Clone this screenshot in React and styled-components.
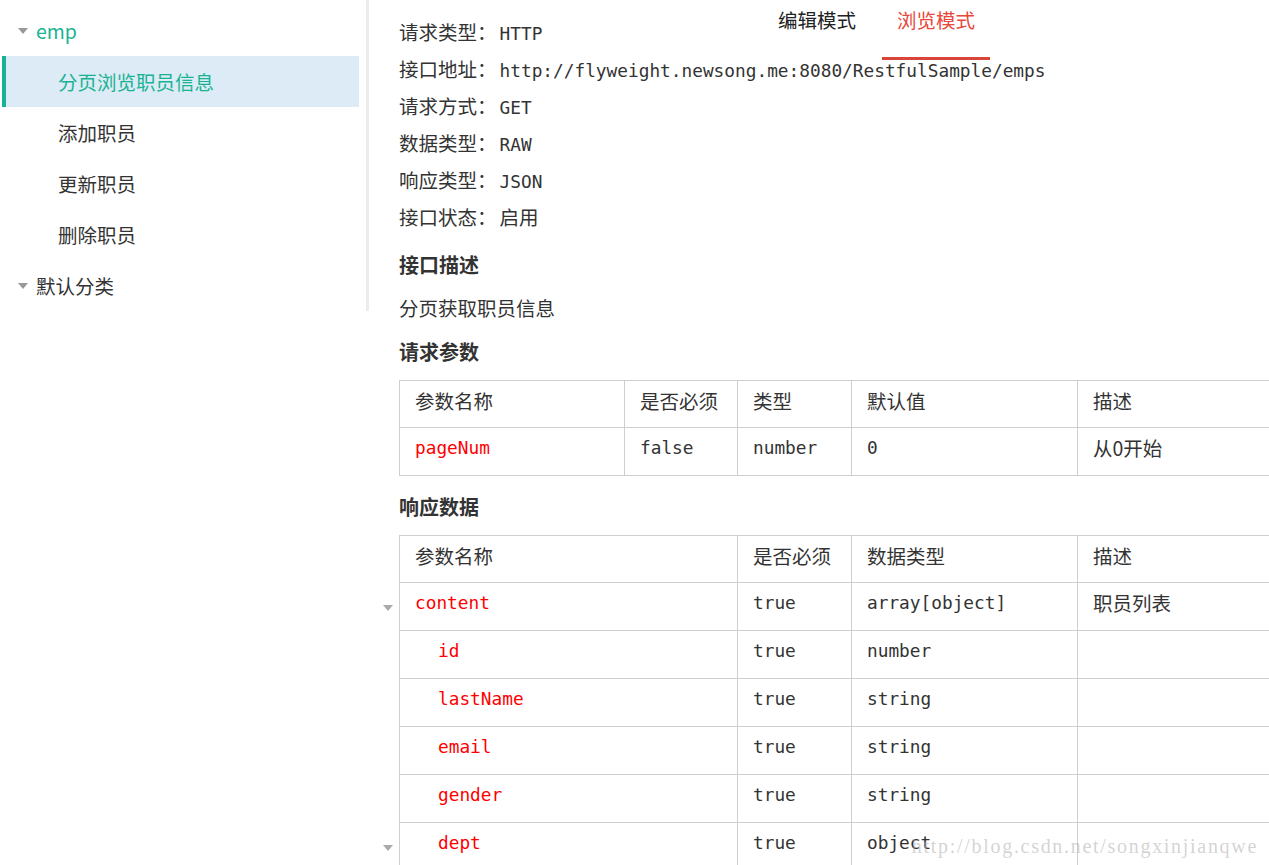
import React from 'react';
import styled, { createGlobalStyle } from 'styled-components';

const GlobalStyle = createGlobalStyle`
  html, body {
    margin: 0;
    padding: 0;
    background: #fff;
    overflow: hidden;
  }
  body {
    font-family: 'Noto Sans CJK SC', 'Noto Sans', sans-serif;
    color: #333;
  }
`;

const mono = `'DejaVu Sans Mono', 'Liberation Mono', 'Noto Sans CJK SC', monospace`;

const Page = styled.div`
  display: flex;
  width: 1269px;
  height: 865px;
  position: relative;
  overflow: hidden;
`;

const Sidebar = styled.nav`
  flex: 0 0 auto;
  width: 366px;
  height: 306px;
  padding-top: 5px;
  border-right: 3px solid #ececec;
  box-sizing: content-box;
`;

const NavList = styled.ul`
  list-style: none;
  margin: 0;
  padding: 0 7px 0 2px;
`;

const NavItem = styled.li`
  display: flex;
  align-items: center;
  height: 51px;
  font-size: 19.5px;
  padding-left: ${p => (p.$group ? '16px' : '52px')};
  border-left: 4px solid ${p => (p.$active ? '#19b394' : 'transparent')};
  margin-left: ${p => (p.$group ? '-4px' : '0')};
  background: ${p => (p.$active ? '#dcebf5' : 'transparent')};
  color: ${p => (p.$active || p.$green ? '#19b394' : '#333')};
`;

const Caret = styled.span`
  display: inline-block;
  width: 0;
  height: 0;
  border-left: 5px solid transparent;
  border-right: 5px solid transparent;
  border-top: 6px solid #999;
  margin-right: 8px;
`;

const Main = styled.main`
  flex: 1 1 auto;
  position: relative;
  padding: 13px 0 0 30px;
  min-width: 0;
`;

const Tabs = styled.div`
  position: absolute;
  top: 0;
  left: 394px;
  display: flex;
  gap: 11px;
`;

const Tab = styled.div`
  width: 108px;
  height: 54px;
  padding-top: 3px;
  box-sizing: content-box;
  text-align: center;
  line-height: 34px;
  font-size: 19.5px;
  color: ${p => (p.$active ? '#e8473b' : '#222')};
  border-bottom: 3px solid ${p => (p.$active ? '#d9453a' : 'transparent')};
`;

const InfoLine = styled.div`
  height: 37px;
  line-height: 37px;
  font-size: 19.5px;
  white-space: nowrap;
`;

const Value = styled.span`
  font-family: ${p => (p.$mono ? mono : 'inherit')};
  font-size: ${p => (p.$mono ? '17.8px' : 'inherit')};
  margin-left: 3px;
`;

const Heading = styled.h3`
  margin: ${p => p.$mt || 11}px 0 0;
  line-height: 37px;
  font-size: 20px;
  font-weight: 700;
  color: #333;
`;

const Text = styled.p`
  margin: 6px 0 0;
  line-height: 37px;
  font-size: 19.5px;
`;

const Table = styled.table`
  border-collapse: collapse;
  width: 1000px;
  table-layout: fixed;
  margin-top: ${p => p.$mt}px;
  font-size: 19.5px;
`;

const Col = styled.col`
  width: ${p => p.$w}px;
`;

const Th = styled.th`
  font-weight: 400;
  text-align: left;
  height: 47px;
  padding: 0 0 7px 15px;
  box-sizing: border-box;
  border: 1px solid #cfcfcf;
  color: #333;
`;

const Td = styled.td`
  position: relative;
  height: 48px;
  padding: 0 0 8px ${p => (p.$indent ? 38 : 15)}px;
  box-sizing: border-box;
  border: 1px solid #cfcfcf;
  font-family: ${p => (p.$cn ? `'Noto Sans CJK SC', sans-serif` : mono)};
  font-size: ${p => (p.$cn ? '19.5px' : '17.8px')};
  color: ${p => (p.$name ? '#f00' : '#333')};
  white-space: nowrap;
`;

const RowCaret = styled.span`
  position: absolute;
  left: -17px;
  top: 22px;
  width: 0;
  height: 0;
  border-left: 5px solid transparent;
  border-right: 5px solid transparent;
  border-top: 6px solid #aaa;
`;

const Watermark = styled.div`
  position: absolute;
  right: 11px;
  bottom: 7px;
  font-family: 'Liberation Serif', 'DejaVu Serif', serif;
  font-size: 20px;
  letter-spacing: 1.7px;
  color: rgba(175, 175, 175, 0.55);
  pointer-events: none;
`;

const info = [
  ['请求类型：', 'HTTP', true],
  ['接口地址：', 'http://flyweight.newsong.me:8080/RestfulSample/emps', true],
  ['请求方式：', 'GET', true],
  ['数据类型：', 'RAW', true],
  ['响应类型：', 'JSON', true],
  ['接口状态：', '启用', false],
];

const response = [
  { name: 'content', req: 'true', type: 'array[object]', desc: '职员列表', caret: true },
  { name: 'id', req: 'true', type: 'number', indent: true },
  { name: 'lastName', req: 'true', type: 'string', indent: true },
  { name: 'email', req: 'true', type: 'string', indent: true },
  { name: 'gender', req: 'true', type: 'string', indent: true },
  { name: 'dept', req: 'true', type: 'object', indent: true, caret: true },
];

export default function App() {
  return (
    <>
      <GlobalStyle />
      <Page>
        <Sidebar>
          <NavList>
            <NavItem $group $green><Caret />emp</NavItem>
            <NavItem $active>分页浏览职员信息</NavItem>
            <NavItem>添加职员</NavItem>
            <NavItem>更新职员</NavItem>
            <NavItem>删除职员</NavItem>
            <NavItem $group><Caret />默认分类</NavItem>
          </NavList>
        </Sidebar>

        <Main>
          <Tabs>
            <Tab>编辑模式</Tab>
            <Tab $active>浏览模式</Tab>
          </Tabs>

          {info.map(([label, value, isMono]) => (
            <InfoLine key={label}>
              {label}
              <Value $mono={isMono}>{value}</Value>
            </InfoLine>
          ))}

          <Heading>接口描述</Heading>
          <Text>分页获取职员信息</Text>
          <Heading $mt={7}>请求参数</Heading>

          <Table $mt={10}>
            <colgroup>
              <Col $w={225} />
              <Col $w={113} />
              <Col $w={114} />
              <Col $w={226} />
              <Col $w={322} />
            </colgroup>
            <thead>
              <tr>
                <Th>参数名称</Th>
                <Th>是否必须</Th>
                <Th>类型</Th>
                <Th>默认值</Th>
                <Th>描述</Th>
              </tr>
            </thead>
            <tbody>
              <tr>
                <Td $name>pageNum</Td>
                <Td>false</Td>
                <Td>number</Td>
                <Td>0</Td>
                <Td $cn>从0开始</Td>
              </tr>
            </tbody>
          </Table>

          <Heading $mt={12}>响应数据</Heading>

          <Table $mt={10}>
            <colgroup>
              <Col $w={338} />
              <Col $w={114} />
              <Col $w={226} />
              <Col $w={322} />
            </colgroup>
            <thead>
              <tr>
                <Th>参数名称</Th>
                <Th>是否必须</Th>
                <Th>数据类型</Th>
                <Th>描述</Th>
              </tr>
            </thead>
            <tbody>
              {response.map(r => (
                <tr key={r.name}>
                  <Td $name $indent={r.indent}>
                    {r.caret && <RowCaret />}
                    {r.name}
                  </Td>
                  <Td>{r.req}</Td>
                  <Td>{r.type}</Td>
                  <Td $cn>{r.desc || ''}</Td>
                </tr>
              ))}
            </tbody>
          </Table>

          <Watermark>http://blog.csdn.net/songxinjianqwe</Watermark>
        </Main>
      </Page>
    </>
  );
}
